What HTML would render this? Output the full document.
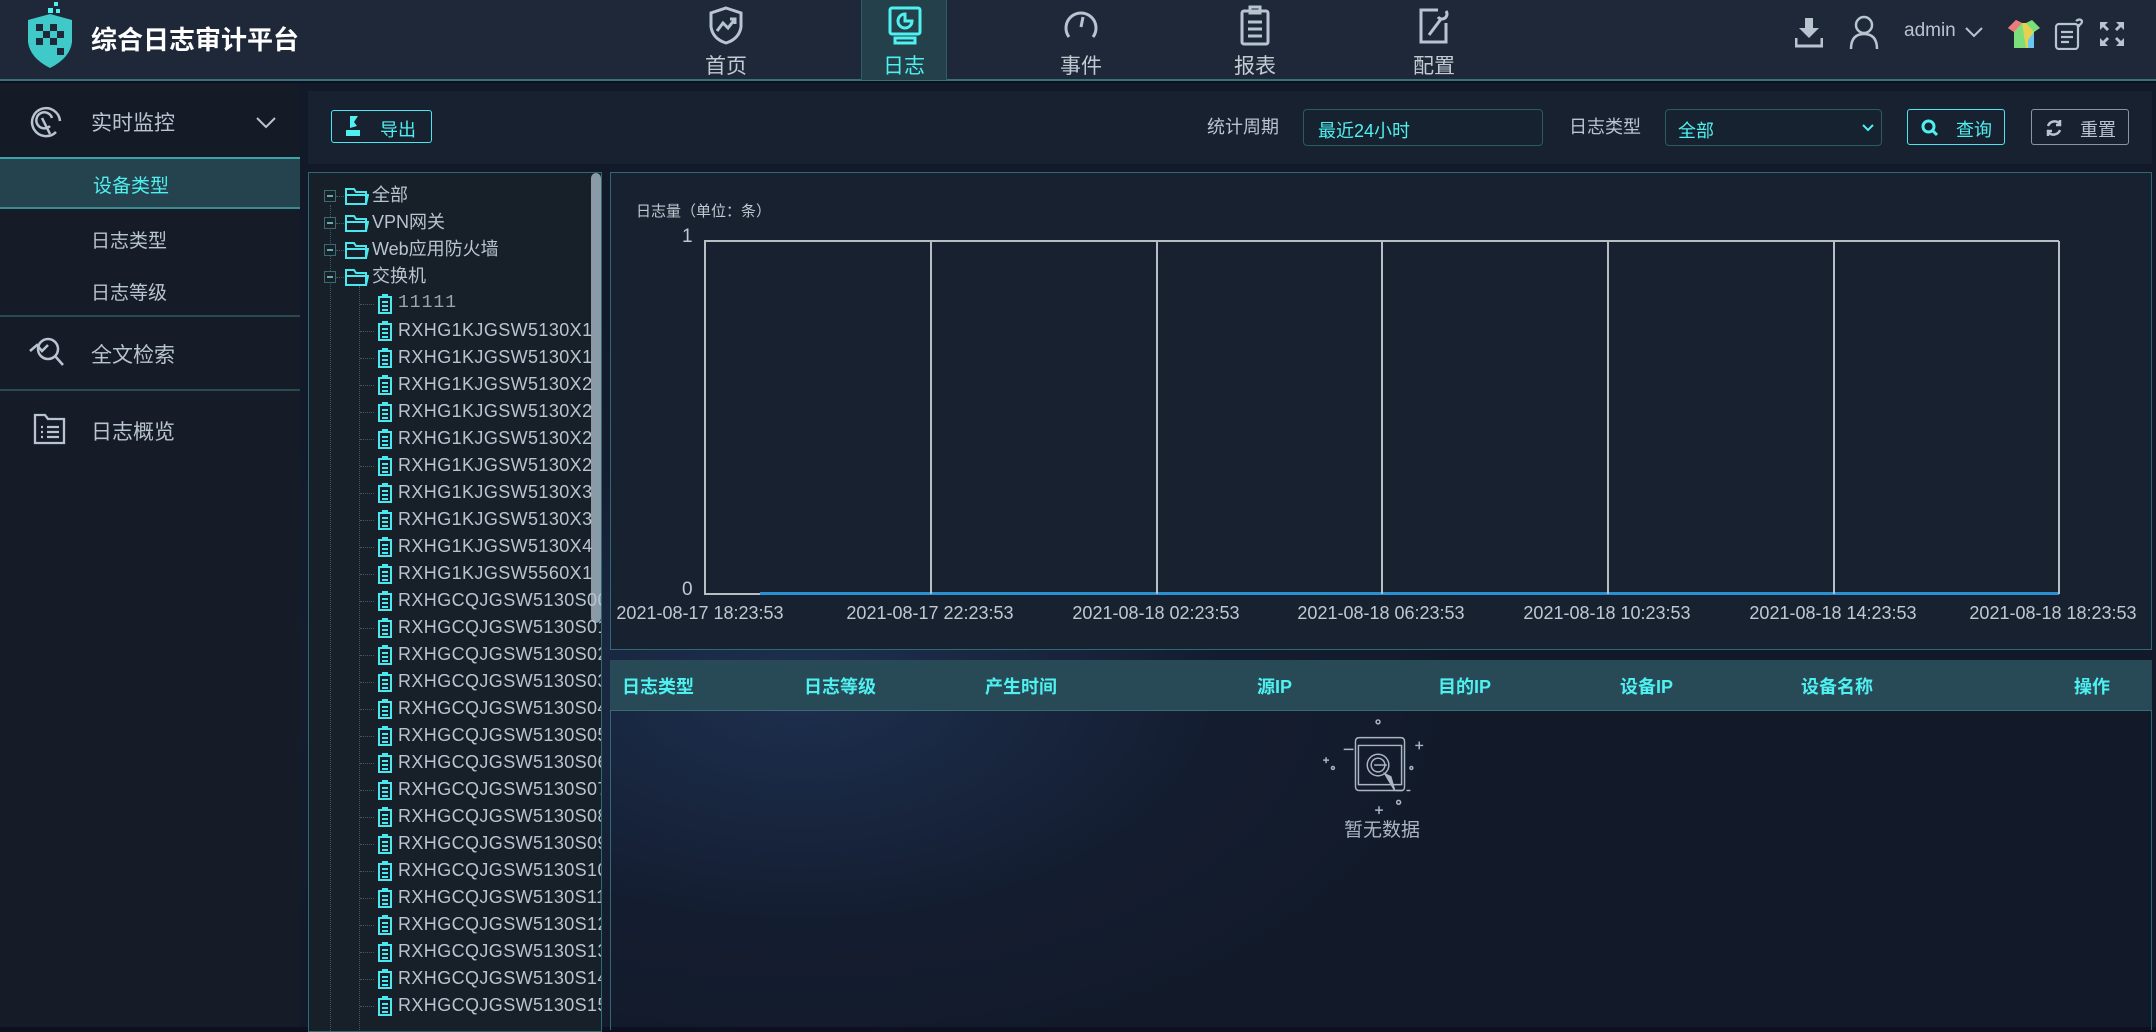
<!DOCTYPE html>
<html><head><meta charset="utf-8"><style>
*{margin:0;padding:0;box-sizing:border-box}
body{width:2156px;height:1027px;overflow:hidden;background:#0b1120;font-family:"Liberation Sans","Noto Sans CJK SC",sans-serif;color:#b8c4cf;position:relative}
.abs{position:absolute}
#hdr{left:0;top:0;width:2156px;height:81px;background:#1e2838;border-bottom:2px solid #3c7078}
.nav{position:absolute;top:0;width:86px;height:80px;text-align:center;color:#c2cad3;font-size:21px}
.nav svg{position:absolute;left:25px;top:5px}
.nav span{position:absolute;left:0;right:0;top:50px}
.nav.act{background:#23404b;color:#4ff0f0;border-left:1px solid #2f5f66;border-right:1px solid #2f5f66}
#side{left:0;top:83px;width:300px;height:944px;background:#151c27}
.si{position:absolute;left:0;width:300px;font-size:21px;color:#b8c4cf}
.sub{position:absolute;left:91px;font-size:19px;color:#b8c4cf}
.sep{position:absolute;left:0;width:300px;height:2px;background:#2a4a52}
.panel{position:absolute;background:#18212f;border:1px solid #2c6b73}
.btn{position:absolute;border:1.5px solid #4ae8ee;border-radius:3px;color:#4ff0f0;font-size:18px}
.inp{position:absolute;border:1px solid #2c5b62;border-radius:4px;color:#4ff0f0;font-size:18px;background:#172230}
.lbl{position:absolute;font-size:18px;color:#b8c4cf}
.tr{position:absolute;font-size:18px;color:#b8c4cf;white-space:nowrap;height:27px;line-height:27px}
.xl{position:absolute;top:603px;font-size:18px;color:#c0c8d2;width:190px;margin-left:-95px;text-align:center}
.vl{position:absolute;top:241px;width:1.5px;height:353px;background:#b8bec6}
.th{position:absolute;top:673px;font-size:18px;font-weight:bold;color:#4ff0f0}
</style></head><body>
<div class="abs" style="left:300px;top:83px;width:1856px;height:944px;background:radial-gradient(ellipse 700px 400px at 500px 600px,#1d3050 0%,#141d30 60%,#121a29 100%)"></div>

<div id="hdr" class="abs">
 <svg class="abs" style="left:22px;top:2px" width="56" height="68" viewBox="0 0 56 68">
  <path d="M6 18 L28 12 L50 18 L50 40 Q48 56 28 66 Q8 56 6 40 Z" fill="#3fc9c9"/>
  <g fill="#1e2838"><rect x="14" y="22" width="7" height="7"/><rect x="28" y="22" width="7" height="7"/><rect x="21" y="29" width="7" height="7"/><rect x="35" y="29" width="7" height="7"/><rect x="14" y="36" width="7" height="7"/><rect x="28" y="36" width="7" height="7"/><rect x="35" y="46" width="7" height="7"/></g>
  <g fill="#4ff0f0"><rect x="26" y="6" width="5" height="5"/><rect x="32" y="0" width="4" height="4"/><rect x="34" y="7" width="4" height="4"/></g>
 </svg>
 <div class="abs" style="left:91px;top:20px;font-size:26px;color:#fff;font-weight:bold">综合日志审计平台</div>

 <div class="nav" style="left:683px"><svg width="36" height="40" viewBox="0 0 36 40" fill="none" stroke="#b8c4cf" stroke-width="3"><path d="M18 3 L33 8 V22 Q31 34 18 38 Q5 34 3 22 V8 Z"/><path d="M9 26 L15 18 L20 23 L27 14 M22 14 H27 V19"/></svg><span>首页</span></div>
 <div class="nav act" style="left:861px"><svg width="36" height="42" viewBox="0 0 36 42" fill="none" stroke="#4ff0f0" stroke-width="3"><rect x="3" y="3" width="30" height="26" rx="2"/><path d="M18 9 A7 7 0 1 0 25 16 H18 Z"/><path d="M8 33 H28 V38 H8 Z"/></svg><span>日志</span></div>
 <div class="nav" style="left:1038px"><svg width="36" height="40" viewBox="0 0 36 40" fill="none" stroke="#b8c4cf" stroke-width="3"><path d="M6 32 A15 15 0 1 1 30 32"/><path d="M18 22 L20 12"/></svg><span>事件</span></div>
 <div class="nav" style="left:1212px"><svg width="36" height="42" viewBox="0 0 36 42" fill="none" stroke="#b8c4cf" stroke-width="3"><rect x="5" y="6" width="26" height="33" rx="2"/><rect x="13" y="2" width="10" height="6"/><path d="M11 17 H25 M11 24 H25 M11 31 H25"/></svg><span>报表</span></div>
 <div class="nav" style="left:1391px"><svg width="36" height="42" viewBox="0 0 36 42" fill="none" stroke="#b8c4cf" stroke-width="3"><path d="M22 5 H5 V37 H30 V18"/><path d="M13 30 L25 14 M22 12 A5 5 0 1 0 30 6"/></svg><span>配置</span></div>

 <svg class="abs" style="left:1795px;top:18px" width="28" height="30" viewBox="0 0 28 30" fill="#b8c4cf"><path d="M10 0 H18 V10 H24 L14 20 L4 10 H10 Z"/><path d="M1 20 V28 H27 V20" fill="none" stroke="#b8c4cf" stroke-width="3"/></svg>
 <svg class="abs" style="left:1848px;top:14px" width="32" height="36" viewBox="0 0 32 36" fill="none" stroke="#b8c4cf" stroke-width="2.5"><circle cx="16" cy="11" r="8"/><path d="M3 35 Q3 20 16 20 Q29 20 29 35"/></svg>
 <div class="abs" style="left:1904px;top:20px;font-size:19px;color:#b8c4cf">admin</div>
 <svg class="abs" style="left:1964px;top:26px" width="20" height="12" viewBox="0 0 20 12" fill="none" stroke="#b8c4cf" stroke-width="2"><path d="M2 2 L10 10 L18 2"/></svg>
 <svg class="abs" style="left:2008px;top:20px" width="32" height="28" viewBox="0 0 32 28"><path d="M8 0 L14 3 L18 3 L24 0 L32 8 L26 12 V28 H6 V12 L0 8 Z" fill="#7be07b"/><path d="M14 3 L18 3 L26 12 V28 H18 Z" fill="#e8d050"/><path d="M20 20 L26 12 V28 H20Z" fill="#6ac8f0"/><path d="M8 0 L14 3 L6 12 L0 8 Z" fill="#f07a7a"/></svg>
 <svg class="abs" style="left:2054px;top:18px" width="30" height="32" viewBox="0 0 30 32" fill="none" stroke="#b8c4cf" stroke-width="2.2"><rect x="2" y="6" width="22" height="25" rx="3"/><path d="M7 14 H19 M7 19 H19 M7 24 H15"/><path d="M22 3 Q26 0 28 3 Q28 6 25 7 V9"/></svg>
 <svg class="abs" style="left:2098px;top:20px" width="28" height="28" viewBox="0 0 28 28" fill="#b8c4cf"><path d="M2 2 L10 2 L7 5 L11 9 L9 11 L5 7 L2 10Z M26 2 L26 10 L23 7 L19 11 L17 9 L21 5 L18 2Z M2 26 L2 18 L5 21 L9 17 L11 19 L7 23 L10 26Z M26 26 L18 26 L21 23 L17 19 L19 17 L23 21 L26 18Z"/></svg>
</div>

<div id="side" class="abs">
 <div class="si" style="top:0;height:74px;background:#151b26"></div>
 <svg class="abs" style="left:30px;top:21px" width="32" height="34" viewBox="0 0 32 34" fill="none" stroke="#b8c4cf" stroke-width="2.5"><path d="M26 28 A14 14 0 1 1 30 17"/><path d="M20 22 A8 8 0 1 1 22 14"/><path d="M12 14 L20 30"/></svg>
 <div class="si" style="left:91px;top:24px;width:auto">实时监控</div>
 <svg class="abs" style="left:256px;top:34px" width="20" height="12" viewBox="0 0 20 12" fill="none" stroke="#b8c4cf" stroke-width="2"><path d="M1 1 L10 10 L19 1"/></svg>
 <div class="abs" style="left:0;top:74px;width:300px;height:52px;background:#25434f;border-top:2px solid #3aa4a8;border-bottom:2px solid #3a8c92"></div>
 <div class="sub" style="left:93px;top:88px;color:#4ff0f0">设备类型</div>
 <div class="sub" style="top:143px">日志类型</div>
 <div class="sub" style="top:195px">日志等级</div>
 <div class="sep" style="top:232px"></div>
 <svg class="abs" style="left:28px;top:252px" width="38" height="34" viewBox="0 0 38 34" fill="none" stroke="#b8c4cf" stroke-width="2.5"><circle cx="20" cy="14" r="10"/><path d="M27 21 L35 30"/><path d="M2 16 L9 10 L14 16 L20 10" /></svg>
 <div class="si" style="left:91px;top:256px;width:auto">全文检索</div>
 <div class="sep" style="top:306px"></div>
 <svg class="abs" style="left:33px;top:330px" width="34" height="32" viewBox="0 0 34 32" fill="none" stroke="#b8c4cf" stroke-width="2.3"><path d="M2 2 H12 L15 6 H31 V30 H2 Z"/><path d="M8 14 H10 M14 14 H26 M8 19 H10 M14 19 H26 M8 24 H10 M14 24 H26"/></svg>
 <div class="si" style="left:91px;top:333px;width:auto">日志概览</div>
</div>

<div class="abs" style="left:308px;top:91px;width:1844px;height:73px;background:#182130"></div>
<div class="btn" style="left:331px;top:110px;width:101px;height:33px">
 <svg class="abs" style="left:12px;top:5px" width="20" height="20" viewBox="0 0 20 20" fill="#4ff0f0"><path d="M6 0 H14 L10 6 L13 10 L6 12 Z"/><rect x="2" y="14" width="14" height="6"/></svg>
 <span class="abs" style="left:48px;top:5px">导出</span></div>
<div class="lbl" style="left:1207px;top:113px">统计周期</div>
<div class="inp" style="left:1303px;top:109px;width:240px;height:37px"><span class="abs" style="left:14px;top:7px">最近24小时</span></div>
<div class="lbl" style="left:1569px;top:113px">日志类型</div>
<div class="inp" style="left:1665px;top:109px;width:217px;height:37px"><span class="abs" style="left:12px;top:7px">全部</span>
 <svg class="abs" style="left:196px;top:14px" width="12" height="8" viewBox="0 0 12 8" fill="none" stroke="#4ff0f0" stroke-width="2"><path d="M1 1 L6 6 L11 1"/></svg></div>
<div class="btn" style="left:1907px;top:109px;width:98px;height:36px">
 <svg class="abs" style="left:13px;top:9px" width="18" height="18" viewBox="0 0 18 18" fill="none" stroke="#4ff0f0" stroke-width="3"><circle cx="7.5" cy="7.5" r="5.5"/><path d="M11 11 L16 16"/></svg>
 <span class="abs" style="left:48px;top:6px">查询</span></div>
<div class="btn" style="left:2031px;top:109px;width:98px;height:36px;border-color:#8896a3;color:#b8c4cf">
 <svg class="abs" style="left:13px;top:8px" width="18" height="20" viewBox="0 0 18 20" fill="none" stroke="#b8c4cf" stroke-width="2.5"><path d="M15 6 A7 7 0 0 0 3 8 M3 14 A7 7 0 0 0 15 12"/><path d="M15 2 V7 H11 M3 18 V13 H7"/></svg>
 <span class="abs" style="left:48px;top:6px">重置</span></div>

<div class="panel" style="left:308px;top:172px;width:294px;height:860px;background:#172029;overflow:hidden">
 <div class="abs" style="left:282px;top:0;width:10px;height:450px;background:#8a9aa6;border-radius:5px"></div>
 <div class="abs" style="left:21px;top:32px;width:0;height:830px;border-left:1px dotted #3c5a60"></div>
 <div class="abs" style="left:50px;top:113px;width:0;height:750px;border-left:1px dotted #3c5a60"></div>
 <div id="tree"></div>
</div>

<div class="panel" style="left:610px;top:172px;width:1542px;height:478px"></div>
<div class="abs" style="left:636px;top:200px;font-size:15px;color:#c0c8d2">日志量（单位：条）</div>
<div class="abs" style="left:682px;top:226px;font-size:19px;color:#c0c8d2">1</div>
<div class="abs" style="left:682px;top:579px;font-size:19px;color:#c0c8d2">0</div>
<div class="abs" style="left:704px;top:240px;width:1355px;height:1.5px;background:#b8bec6"></div>
<div class="abs" style="left:704px;top:593px;width:60px;height:2px;background:#b8bec6"></div>
<div class="abs" style="left:760px;top:592px;width:1299px;height:3px;background:#2a90d4"></div>
<div class="vl" style="left:704px"></div><div class="vl" style="left:930px"></div><div class="vl" style="left:1156px"></div><div class="vl" style="left:1381px"></div><div class="vl" style="left:1607px"></div><div class="vl" style="left:1833px"></div><div class="vl" style="left:2058px"></div>
<div class="xl" style="left:700px">2021-08-17 18:23:53</div>
<div class="xl" style="left:930px">2021-08-17 22:23:53</div>
<div class="xl" style="left:1156px">2021-08-18 02:23:53</div>
<div class="xl" style="left:1381px">2021-08-18 06:23:53</div>
<div class="xl" style="left:1607px">2021-08-18 10:23:53</div>
<div class="xl" style="left:1833px">2021-08-18 14:23:53</div>
<div class="xl" style="left:2058px;margin-left:-100px">2021-08-18 18:23:53</div>

<div class="abs" style="left:610px;top:660px;width:1542px;height:370px;border-left:1px solid #2c6b73;border-right:1px solid #2c6b73"></div>
<div class="abs" style="left:610px;top:660px;width:1542px;height:51px;background:#284a57;border-bottom:1px solid #3a6a74"></div>
<div class="th" style="left:622px">日志类型</div><div class="th" style="left:804px">日志等级</div><div class="th" style="left:985px">产生时间</div><div class="th" style="left:1257px">源IP</div><div class="th" style="left:1438px">目的IP</div><div class="th" style="left:1620px">设备IP</div><div class="th" style="left:1801px">设备名称</div><div class="th" style="left:2074px">操作</div>
<svg class="abs" style="left:1300px;top:716px" width="160" height="102" viewBox="0 0 130 104" fill="none" stroke="#aab6c2" stroke-width="1.5">
 <circle cx="63" cy="6" r="2"/><path d="M40 26 V72 Q40 76 44 76 H87 Q90 76 90 72 V26 Q90 22 86 22 H44 Q40 22 40 26Z"/><path d="M43 30 V70 H87 V30 Z"/>
 <circle cx="63" cy="50" r="11"/><circle cx="63" cy="50" r="7"/><path d="M59 50 H72"/><path d="M70 59 L80 76 L76 62Z" fill="#aab6c2"/>
 <path d="M28 34 H38 M81 76 H88 M92 76 H96 M105 26 V34 M101 30 H109 M7 45 H13 M10 42 V48 M64 92 V100 M60 96 H68"/><circle cx="17" cy="53" r="1.5"/><circle cx="97" cy="53" r="1.5"/><circle cx="84" cy="88" r="2"/>
</svg>
<div class="abs" style="left:1344px;top:815px;font-size:19px;color:#aab6c2">暂无数据</div>

<script>
var t=document.getElementById('tree'),h='';
var roots=['全部','VPN网关','Web应用防火墙','交换机'];
var kids=['11111','RXHG1KJGSW5130X1','RXHG1KJGSW5130X1','RXHG1KJGSW5130X2','RXHG1KJGSW5130X2','RXHG1KJGSW5130X2','RXHG1KJGSW5130X2','RXHG1KJGSW5130X3','RXHG1KJGSW5130X3','RXHG1KJGSW5130X4','RXHG1KJGSW5560X1'];
for(var i=0;i<16;i++)kids.push('RXHGCQJGSW5130S'+(i<10?'0':'')+i);
var y=9;
roots.forEach(function(r){
 h+='<div class="abs" style="left:15px;top:'+(y+8)+'px;width:12px;height:12px;border:1px solid #3c6a70;background:#172029"><div style="position:absolute;left:2px;top:4px;width:6px;height:2px;background:#6aa"></div></div>';
 h+='<div class="abs" style="left:27px;top:'+(y+14)+'px;width:8px;border-top:1px dotted #3c5a60"></div>';
 h+='<svg class="abs" style="left:36px;top:'+(y+4)+'px" width="24" height="20" viewBox="0 0 24 20" fill="none" stroke="#4ae8ee" stroke-width="2"><path d="M1 3 H9 L11 6 H21 V18 H1Z M1 9 H23 L21 18"/></svg>';
 h+='<div class="tr" style="left:63px;top:'+y+'px">'+r+'</div>';y+=27;});
kids.forEach(function(k,i){
 h+='<div class="abs" style="left:51px;top:'+(y+14)+'px;width:14px;border-top:1px dotted #3c5a60"></div>';
 h+='<svg class="abs" style="left:68px;top:'+(y+4)+'px" width="16" height="20" viewBox="0 0 16 20" fill="none" stroke="#4ae8ee" stroke-width="2"><rect x="2" y="3" width="12" height="16"/><path d="M5 1 H11 M5 8 H11 M5 12 H11 M5 16 H11"/></svg>';
 h+='<div class="tr" style="left:89px;top:'+y+'px;'+(i==0?'font-family:Liberation Mono,monospace;color:#9aa6b2;':'')+'letter-spacing:'+(i==0?'1px':'0.4px')+'">'+k+'</div>';y+=27;});
t.innerHTML=h;
</script>
</body></html>
